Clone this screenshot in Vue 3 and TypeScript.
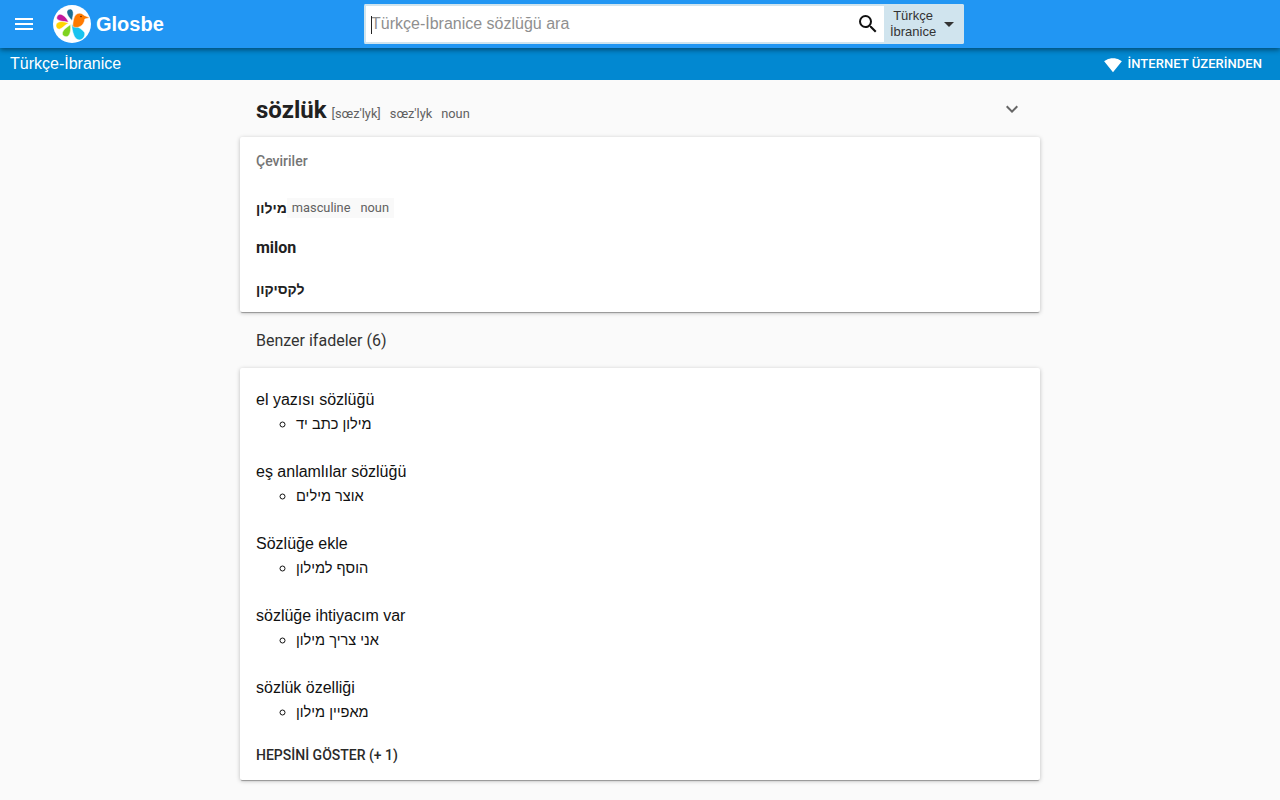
<script setup lang="ts">
interface Phrase {
    term: string;
    translation: string;
}

const phrases: Phrase[] = [
    { term: "el yazısı sözlüğü", translation: "מילון כתב יד" },
    { term: "eş anlamlılar sözlüğü", translation: "אוצר מילים" },
    { term: "Sözlüğe ekle", translation: "הוסף למילון" },
    { term: "sözlüğe ihtiyacım var", translation: "אני צריך מילון" },
    { term: "sözlük özelliği", translation: "מאפיין מילון" },
];
</script>

<template>
    <div class="page">
        <header class="topbar">
            <button class="menu" aria-label="Menu">
                <span></span><span></span><span></span>
            </button>
            <div class="brand">
                <svg class="logo" viewBox="0 0 38 38" width="38" height="38">
                    <circle cx="19" cy="19" r="19" fill="#fff" />
                    <path d="M19 15.500C16.500 13 13.500 9.500 14 6.500C14.500 4.500 17 3.500 18.500 4.500C20.500 5.500 20.500 9 19.800 11.500C19.500 13 19.200 14.500 19 15.500Z" fill="#1b6f93" />
                    <path d="M15.500 17C12.500 16.800 7 16.500 4.500 14.500C3 13 4 10.500 6 9.500C9 8.300 13.500 12.500 15.500 17Z" fill="#c2199c" />
                    <path d="M16 18.300C12.500 19 9.500 23.500 6.500 24.200C4 24.500 2.800 22 3 20C3.300 17.500 6.500 16.300 9 16.500C11.500 16.800 14 17.500 16 18.300Z" fill="#ffd400" />
                    <path d="M17.500 19.500C17.800 23 18 28 15.500 30.800C13.500 32.500 10.500 31.500 9.500 29.500C8.800 27 11 24.500 13 23C14.500 21.800 16 20.500 17.500 19.500Z" fill="#7ed321" />
                    <path d="M18.800 19.500C22.500 20.500 29 23.500 31.500 27.500C32.500 30.500 30.500 33.800 27.500 34.800C24.500 35.500 21.800 33 20.800 30C19.500 26.500 18.800 23 18.800 19.500Z" fill="#19c3ef" />
                    <path d="M19.800 21.500C19.800 17.500 20.500 12 23 9.500C25.500 7.500 29 7.700 30.800 10.200L36.800 12.800L31.800 14C31.500 18 29 21 26 22C24 22.800 21.500 22.500 19.800 21.500Z" fill="#ff7a00" />
                    <circle cx="28" cy="11.500" r="0.800" fill="#5a2a00" />
                </svg>
                <span class="brand-name">Glosbe</span>
            </div>
            <div class="search">
                <input class="search-input" type="text" placeholder="Türkçe-İbranice sözlüğü ara">
                <span class="caret"></span>
                <button class="search-btn" aria-label="Ara">
                    <svg viewBox="0 0 24 24" width="24" height="24">
                        <path fill="#111" d="M15.500 14h-.79l-.28-.27A6.470 6.470 0 0 0 16 9.500 6.500 6.500 0 1 0 9.500 16c1.610 0 3.090-.59 4.230-1.570l.27.28v.79l5 4.990L20.490 19l-4.990-5zm-6 0C7.010 14 5 11.990 5 9.500S7.010 5 9.500 5 14 7.010 14 9.500 11.990 14 9.500 14z" />
                    </svg>
                </button>
                <div class="lang">
                    <div class="lang-names">
                        <span>Türkçe</span>
                        <span>İbranice</span>
                    </div>
                    <svg viewBox="0 0 24 24" width="24" height="24">
                        <path fill="#333" d="M7 10l5 5 5-5z" />
                    </svg>
                </div>
            </div>
        </header>

        <div class="subbar">
            <span class="subbar-title">Türkçe-İbranice</span>
            <div class="online">
                <svg viewBox="0 0 24 24" width="18" height="18">
                    <path fill="#fff" d="M12 21.500 23.800 7C23.300 6.600 18.800 3 12 3S.700 6.600.200 7L12 21.500z" />
                </svg>
                <span>İNTERNET ÜZERİNDEN</span>
            </div>
        </div>

        <main class="content">
            <div class="entry-head">
                <div class="entry-title">
                    <h1>sözlük</h1>
                    <span class="ipa">[sœz'lyk]</span>
                    <span class="tag">sœz'lyk</span>
                    <span class="tag">noun</span>
                </div>
                <svg class="chevron" viewBox="0 0 24 24" width="24" height="24">
                    <path fill="#666" d="M7.410 8.590 12 13.170l4.590-4.580L18 10l-6 6-6-6z" />
                </svg>
            </div>

            <section class="card translations">
                <h2>Çeviriler</h2>
                <div class="tr-row first">
                    <strong class="he">מילון</strong>
                    <span class="tr-tags"><span>masculine</span><span>noun</span></span>
                </div>
                <div class="tr-row latin"><strong>milon</strong></div>
                <div class="tr-row last"><strong class="he">לקסיקון</strong></div>
            </section>

            <h3 class="similar-title">Benzer ifadeler (6)</h3>

            <section class="card similar">
                <div v-for="phrase in phrases" :key="phrase.term" class="phrase">
                    <div class="phrase-term">{{ phrase.term }}</div>
                    <ul>
                        <li><span>{{ phrase.translation }}</span></li>
                    </ul>
                </div>
                <div class="show-all">HEPSİNİ GÖSTER (+ 1)</div>
            </section>
        </main>
    </div>
</template>

<style>
html,
body {
    margin: 0;
    background: #fafafa;
}
</style>

<style scoped>
.page {
    height: 800px;
    overflow: hidden;
    font-family: Roboto, "Liberation Sans", sans-serif;
    color: #212121;
}

.topbar {
    position: relative;
    z-index: 2;
    height: 48px;
    display: flex;
    align-items: center;
    background: #2196f3;
    box-shadow: 0 2px 5px rgba(0, 0, 0, 0.45);
}

.menu {
    width: 18px;
    height: 12px;
    margin-left: 15px;
    padding: 0;
    border: none;
    background: none;
    display: flex;
    flex-direction: column;
    justify-content: space-between;
}

.menu span {
    display: block;
    height: 2px;
    background: #fff;
}

.brand {
    width: 311px;
    margin-left: 20px;
    display: flex;
    align-items: center;
    gap: 5px;
}

.logo path {
    stroke: #fff;
    stroke-width: 0.5;
}

.brand-name {
    font-family: "Liberation Sans", sans-serif;
    font-size: 20px;
    font-weight: 700;
    color: #fff;
}

.search {
    position: relative;
    width: 600px;
    height: 40px;
    box-sizing: border-box;
    display: flex;
    background: #fff;
    border: 2px solid #d0e4ee;
    border-right: none;
    border-radius: 2px;
}

.search-input {
    flex: 1;
    min-width: 0;
    padding: 0 0 0 5px;
    border: none;
    outline: none;
    background: transparent;
    caret-color: transparent;
    font-family: "Liberation Sans", sans-serif;
    font-size: 16px;
    color: #212121;
}

.search-input::placeholder {
    color: #8f8f8f;
    opacity: 1;
}

.caret {
    position: absolute;
    left: 5px;
    top: 10px;
    width: 1px;
    height: 18px;
    background: #222;
}

.search-btn {
    width: 33px;
    padding: 0;
    border: none;
    background: none;
    display: flex;
    align-items: center;
    justify-content: center;
}

.lang {
    width: 80px;
    margin: -2px 0;
    padding-left: 6px;
    box-sizing: border-box;
    display: flex;
    align-items: center;
    background: #d0e4ee;
    border-radius: 0 2px 2px 0;
    font-family: "Liberation Sans", sans-serif;
    font-size: 13px;
    line-height: 16px;
    color: #333;
}

.lang-names {
    width: 46px;
    display: flex;
    flex-direction: column;
    align-items: center;
}

.lang svg {
    margin-left: 1px;
}

.subbar {
    position: relative;
    z-index: 1;
    height: 32px;
    padding: 0 18px 0 10px;
    display: flex;
    align-items: center;
    justify-content: space-between;
    background: #0288d1;
    color: #fff;
}

.subbar-title {
    font-family: "Liberation Sans", sans-serif;
    font-size: 16px;
}

.online {
    display: flex;
    align-items: center;
    gap: 6px;
    font-size: 13px;
    font-weight: 500;
    line-height: 15px;
    letter-spacing: 0.05px;
}

.online span {
    margin-bottom: 1px;
}

.online svg {
    margin-top: 2px;
}

.content {
    width: 800px;
    margin: 0 auto;
}

.entry-head {
    height: 57px;
    padding: 0 16px;
    display: flex;
    justify-content: space-between;
}

.entry-title {
    display: flex;
    align-items: baseline;
    padding-top: 15px;
    font-size: 12.8px;
    color: #616161;
}

.entry-title h1 {
    margin: 0;
    font-size: 24px;
    line-height: 30px;
    font-weight: 700;
    color: #212121;
}

.ipa {
    margin-left: 5px;
}

.tag {
    margin-left: 9px;
}

.chevron {
    margin: 17px 0 0;
}

.card {
    background: #fff;
    border-radius: 2px;
    box-shadow: 0 1px 4px rgba(0, 0, 0, 0.25), 0 2px 1px -1px rgba(0, 0, 0, 0.3);
}

.translations {
    height: 175px;
    padding: 0 16px;
    box-sizing: border-box;
}

.translations h2 {
    margin: 0;
    padding-top: 16px;
    font-size: 14px;
    line-height: 16px;
    font-weight: 500;
    color: #757575;
}

.tr-row {
    display: flex;
    align-items: center;
    font-size: 16px;
    line-height: 20px;
}

.tr-row strong {
    font-weight: 700;
    color: #212121;
}

.tr-row .he {
    font-family: "Liberation Sans", sans-serif;
    font-size: 14px;
}

.tr-row.first {
    margin-top: 29px;
}

.tr-row.latin {
    margin-top: 20px;
}

.tr-row.last {
    margin-top: 21px;
}

.tr-tags {
    padding: 0 5px;
    display: flex;
    gap: 10px;
    background: #f9f9f9;
    font-size: 12.8px;
    color: #616161;
}

.similar-title {
    margin: 0;
    height: 56px;
    padding: 0 16px;
    display: flex;
    align-items: center;
    font-size: 16px;
    font-weight: 400;
    color: #333;
}

.similar {
    height: 412px;
    padding: 21px 16px 0;
    box-sizing: border-box;
    font-family: "Liberation Sans", sans-serif;
    font-size: 16px;
    line-height: 22px;
    color: #111;
}

.phrase {
    height: 72px;
}

.phrase-term {
    height: 22px;
}

.phrase ul {
    margin: 0;
    padding-left: 40px;
    list-style: circle;
    line-height: 26px;
}

.phrase li span {
    font-size: 14.6px;
}

.show-all {
    margin-top: -5px;
    font-family: Roboto, "Liberation Sans", sans-serif;
    font-size: 14px;
    font-weight: 500;
    color: #2a2a2a;
}
</style>
